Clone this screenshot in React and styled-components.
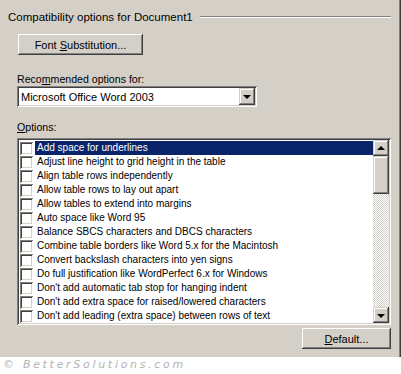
import styled, { createGlobalStyle } from "styled-components";

const GlobalStyle = createGlobalStyle`
    body {
        margin: 0;
        background: #ffffff;
        font-family: "Liberation Sans", Arial, sans-serif;
        font-size: 11px;
        color: #000000;
    }
`;

const options = [
    "Add space for underlines",
    "Adjust line height to grid height in the table",
    "Align table rows independently",
    "Allow table rows to lay out apart",
    "Allow tables to extend into margins",
    "Auto space like Word 95",
    "Balance SBCS characters and DBCS characters",
    "Combine table borders like Word 5.x for the Macintosh",
    "Convert backslash characters into yen signs",
    "Do full justification like WordPerfect 6.x for Windows",
    "Don't add automatic tab stop for hanging indent",
    "Don't add extra space for raised/lowered characters",
    "Don't add leading (extra space) between rows of text",
];

const App = () => {
    return (
        <>
            <GlobalStyle />
            <Dialog>
                <GroupHeader>
                    <GroupTitle>Compatibility options for Document1</GroupTitle>
                    <GroupLine />
                </GroupHeader>
                <Body>
                    <Button $width={125} $indent={1}>
                        <span>Font <Key>S</Key>ubstitution...</span>
                    </Button>
                    <Label $top={18}>
                        Reco<Key>m</Key>mended options for:
                    </Label>
                    <Select>
                        <SelectText>Microsoft Office Word 2003</SelectText>
                        <ArrowButton>
                            <Triangle $down />
                        </ArrowButton>
                    </Select>
                    <Label $top={14}>
                        <Key>O</Key>ptions:
                    </Label>
                    <ListBox>
                        <Rows>
                            {options.map((text, i) => (
                                <Row key={text}>
                                    <Check />
                                    <RowText $selected={i === 0}>{text}</RowText>
                                </Row>
                            ))}
                        </Rows>
                        <ScrollBar>
                            <ArrowButton>
                                <Triangle />
                            </ArrowButton>
                            <Thumb />
                            <Track />
                            <ArrowButton>
                                <Triangle $down />
                            </ArrowButton>
                        </ScrollBar>
                    </ListBox>
                    <Footer>
                        <Button $width={89}>
                            <span><Key>D</Key>efault...</span>
                        </Button>
                    </Footer>
                </Body>
            </Dialog>
            <Watermark>© BetterSolutions.com</Watermark>
        </>
    );
};

const Dialog = styled.div`
    width: 401px;
    height: 357px;
    box-sizing: border-box;
    padding-right: 2px;
    background: #d4d0c8;
    border-right: 1px solid #404040;
    box-shadow: inset -1px 0 #808080;
`;

const GroupHeader = styled.div`
    display: flex;
    align-items: center;
    height: 18px;
    padding: 8px 7px 0 8px;
`;

const GroupTitle = styled.span`
    font-size: 11.5px;
    line-height: 13px;
    padding-right: 7px;
    margin-top: 1px;
`;

const GroupLine = styled.div`
    flex: 1;
    height: 0;
    border-top: 1px solid #808080;
    border-bottom: 1px solid #ffffff;
`;

const Body = styled.div`
    display: flex;
    flex-direction: column;
    align-items: flex-start;
    padding: 8px 7px 0 17px;
`;

const Button = styled.div`
    width: ${(p) => p.$width}px;
    height: 21px;
    margin-left: ${(p) => p.$indent || 0}px;
    display: flex;
    align-items: center;
    justify-content: center;
    box-sizing: border-box;
    background: #d4d0c8;
    box-shadow: inset -1px -1px #404040, inset 1px 1px #ffffff,
        inset -2px -2px #808080, inset 2px 2px #d4d0c8;
`;

const Key = styled.span`
    text-decoration: underline;
`;

const Label = styled.div`
    margin-top: ${(p) => p.$top}px;
    line-height: 13px;
    font-size: 10.6px;
`;

const Sunken = styled.div`
    box-sizing: border-box;
    background: #ffffff;
    box-shadow: inset 1px 1px #808080, inset -1px -1px #ffffff,
        inset 2px 2px #404040, inset -2px -2px #d4d0c8;
`;

const Select = styled(Sunken)`
    width: 240px;
    height: 21px;
    display: flex;
    align-items: center;
    padding: 2px;
`;

const SelectText = styled.span`
    flex: 1;
    padding-left: 2px;
`;

const ArrowButton = styled.div`
    width: 16px;
    height: 16px;
    flex: none;
    display: flex;
    align-items: center;
    justify-content: center;
    box-sizing: border-box;
    background: #d4d0c8;
    box-shadow: inset -1px -1px #404040, inset 1px 1px #d4d0c8,
        inset -2px -2px #808080, inset 2px 2px #ffffff;

    ${Select} & {
        height: 17px;
    }
`;

const Triangle = styled.span`
    width: 0;
    height: 0;
    border-left: 4px solid transparent;
    border-right: 4px solid transparent;
    ${(p) =>
        p.$down
            ? "border-top: 4px solid #000; margin-top: 1px;"
            : "border-bottom: 4px solid #000; margin-top: -1px;"}
`;

const ListBox = styled(Sunken)`
    margin-top: 4px;
    width: 374px;
    height: 187px;
    display: flex;
    padding: 2px;
`;

const Rows = styled.div`
    flex: 1;
    padding-top: 1px;
    overflow: hidden;
`;

const Row = styled.div`
    display: flex;
    align-items: center;
    height: 14px;
`;

const Check = styled.span`
    width: 13px;
    height: 13px;
    margin: 0 2px 0 1px;
    flex: none;
    box-sizing: border-box;
    background: #ffffff;
    box-shadow: inset 1px 1px #808080, inset -1px -1px #ffffff,
        inset 2px 2px #404040, inset -2px -2px #d4d0c8;
`;

const RowText = styled.span`
    flex: 1;
    height: 14px;
    line-height: 14px;
    padding-left: 2px;
    font-size: 10px;
    white-space: nowrap;
    background: ${(p) => (p.$selected ? "#0a246a" : "transparent")};
    color: ${(p) => (p.$selected ? "#ffffff" : "#000000")};
`;

const ScrollBar = styled.div`
    width: 16px;
    display: flex;
    flex-direction: column;
`;

const Thumb = styled.div`
    height: 38px;
    box-sizing: border-box;
    background: #d4d0c8;
    box-shadow: inset -1px -1px #404040, inset 1px 1px #d4d0c8,
        inset -2px -2px #808080, inset 2px 2px #ffffff;
`;

const Track = styled.div`
    flex: 1;
    background: repeating-conic-gradient(#d4d0c8 0 25%, #ffffff 0 50%) 0 0 / 2px 2px;
`;

const Footer = styled.div`
    align-self: stretch;
    display: flex;
    justify-content: flex-end;
    margin-top: 3px;
`;

const Watermark = styled.div`
    padding: 1px 0 0 3px;
    font-family: "DejaVu Sans", sans-serif;
    font-style: italic;
    font-size: 11px;
    letter-spacing: 2.7px;
    color: #b4b4b4;
`;

export default App;
